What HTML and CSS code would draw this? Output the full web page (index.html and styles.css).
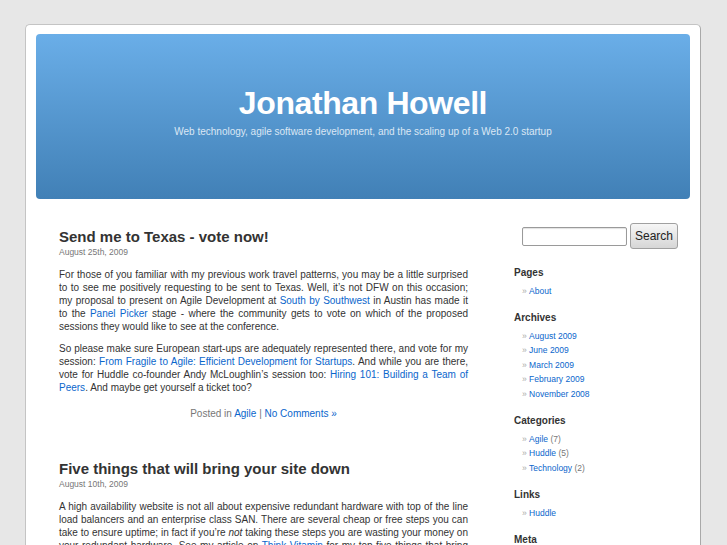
FILE: index.html
```html
<!DOCTYPE html>
<html>
<head>
<meta charset="utf-8">
<title>Jonathan Howell</title>
<link rel="stylesheet" href="styles.css">
</head>
<body>
<div class="page">
  <header class="header">
    <h1 class="site-title">Jonathan Howell</h1>
    <div class="site-desc">Web technology, agile software development, and the scaling up of a Web 2.0 startup</div>
  </header>
  <div class="layout">
    <main class="content">
      <article class="post">
        <h2 class="post-title">Send me to Texas - vote now!</h2>
        <div class="post-date">August 25th, 2009</div>
        <div class="entry">
          <p>For those of you familiar with my previous work travel patterns, you may be a little surprised to to see me positively requesting to be sent to Texas. Well, it’s not DFW on this occasion; my proposal to present on Agile Development at <a href="#">South by Southwest</a> in Austin has made it to the <a href="#">Panel Picker</a> stage - where the community gets to vote on which of the proposed sessions they would like to see at the conference.</p>
          <p>So please make sure European start-ups are adequately represented there, and vote for my session: <a href="#">From Fragile to Agile: Efficient Development for Startups</a>. And while you are there, vote for Huddle co-founder Andy McLoughlin’s session too: <a href="#">Hiring 101: Building a Team of Peers</a>. And maybe get yourself a ticket too?</p>
        </div>
        <p class="post-meta">Posted in <a href="#">Agile</a> | <a href="#">No Comments »</a></p>
      </article>
      <article class="post">
        <h2 class="post-title">Five things that will bring your site down</h2>
        <div class="post-date">August 10th, 2009</div>
        <div class="entry">
          <p>A high availability website is not all about expensive redundant hardware with top of the line load balancers and an enterprise class SAN. There are several cheap or free steps you can take to ensure uptime; in fact if you’re <em>not</em> taking these steps you are wasting your money on your redundant hardware. See my article on <a href="#">Think Vitamin</a> for my top five things that bring your site down, and how to avoid them.</p>
        </div>
      </article>
    </main>
    <aside class="sidebar">
      <form class="search">
        <input class="search-input" type="text">
        <button class="search-btn" type="button">Search</button>
      </form>
      <section class="widget">
        <h3 class="widget-title">Pages</h3>
        <ul class="widget-list">
          <li><a href="#">About</a></li>
        </ul>
      </section>
      <section class="widget">
        <h3 class="widget-title">Archives</h3>
        <ul class="widget-list">
          <li><a href="#">August 2009</a></li>
          <li><a href="#">June 2009</a></li>
          <li><a href="#">March 2009</a></li>
          <li><a href="#">February 2009</a></li>
          <li><a href="#">November 2008</a></li>
        </ul>
      </section>
      <section class="widget">
        <h3 class="widget-title">Categories</h3>
        <ul class="widget-list">
          <li><a href="#">Agile</a> <span class="count">(7)</span></li>
          <li><a href="#">Huddle</a> <span class="count">(5)</span></li>
          <li><a href="#">Technology</a> <span class="count">(2)</span></li>
        </ul>
      </section>
      <section class="widget">
        <h3 class="widget-title">Links</h3>
        <ul class="widget-list">
          <li><a href="#">Huddle</a></li>
        </ul>
      </section>
      <section class="widget">
        <h3 class="widget-title">Meta</h3>
        <ul class="widget-list">
          <li><a href="#">Log in</a></li>
        </ul>
      </section>
    </aside>
  </div>
</div>
</body>
</html>
```

FILE: styles.css
```css
html, body {
  margin: 0;
  padding: 0;
}
body {
  background: #e7e7e7;
  font-family: "Liberation Sans", Arial, sans-serif;
  color: #333;
  overflow: hidden;
}
a {
  color: #0a66cc;
  text-decoration: none;
}
.page {
  box-sizing: border-box;
  width: 676px;
  min-height: 600px;
  margin: 24px 0 0 25px;
  padding: 9px 10px 0 10px;
  background: #fff;
  border: 1px solid #c4c4c4;
  border-right-color: #a9a9a9;
  border-bottom: none;
  border-radius: 5px 5px 0 0;
}
.header {
  height: 165px;
  border-radius: 4px;
  background: linear-gradient(#6aaee8, #4180b6);
  text-align: center;
  padding-top: 51px;
  box-sizing: border-box;
}
.site-title {
  margin: 0;
  font-size: 32px;
  line-height: 36px;
  font-weight: bold;
  letter-spacing: -0.4px;
  color: #fff;
}
.site-desc {
  margin-top: 5px;
  font-size: 10px;
  line-height: 12px;
  color: #dbe7f4;
}
.layout {
  display: flex;
  align-items: flex-start;
}
.content {
  width: 409px;
  margin-left: 23px;
  padding-top: 29px;
}
.post {
  margin-bottom: 40px;
}
.post-title {
  margin: 0 0 1px;
  font-size: 15px;
  line-height: 18px;
  font-weight: bold;
  color: #333;
}
.post-date {
  font-size: 8.5px;
  line-height: 11px;
  color: #777;
}
.entry p {
  margin: 9px 0;
  font-size: 10px;
  line-height: 13px;
  text-align: justify;
}
.entry p:first-child {
  margin-top: 10px;
}
.post-meta {
  margin: 13px 0 0;
  font-size: 10px;
  line-height: 13px;
  text-align: center;
  color: #777;
}
.sidebar {
  width: 164px;
  margin-left: 46px;
  padding-top: 24px;
}
.search {
  display: flex;
  align-items: center;
  justify-content: flex-end;
  gap: 3px;
  margin: 0 0 18px;
}
.search-input {
  box-sizing: border-box;
  width: 105px;
  height: 19px;
  margin: 1px 0 0;
  padding: 0 3px;
  border: 1px solid #9a9a9a;
  border-radius: 2px;
  box-shadow: inset 0 1px 1px rgba(0,0,0,0.12);
  background: #fff;
}
.search-btn {
  box-sizing: border-box;
  width: 48px;
  height: 26px;
  margin: 0;
  padding: 0;
  border: 1px solid #a0a0a0;
  border-radius: 3px;
  background: linear-gradient(#f6f6f6, #d6d6d6);
  font-family: "Liberation Sans", Arial, sans-serif;
  font-size: 12px;
  color: #222;
}
.widget {
  margin-bottom: 13.75px;
}
.widget-title {
  margin: 0 0 4.75px;
  font-size: 10px;
  line-height: 12px;
  font-weight: bold;
  color: #333;
}
.widget-list {
  list-style: none;
  margin: 0;
  padding: 0 0 0 8px;
}
.widget-list li {
  font-size: 8.5px;
  line-height: 14.5px;
  color: #777;
}
.widget-list li::before {
  content: "\00BB\00A0";
  color: #aaa;
}
.count {
  color: #777;
}
```
